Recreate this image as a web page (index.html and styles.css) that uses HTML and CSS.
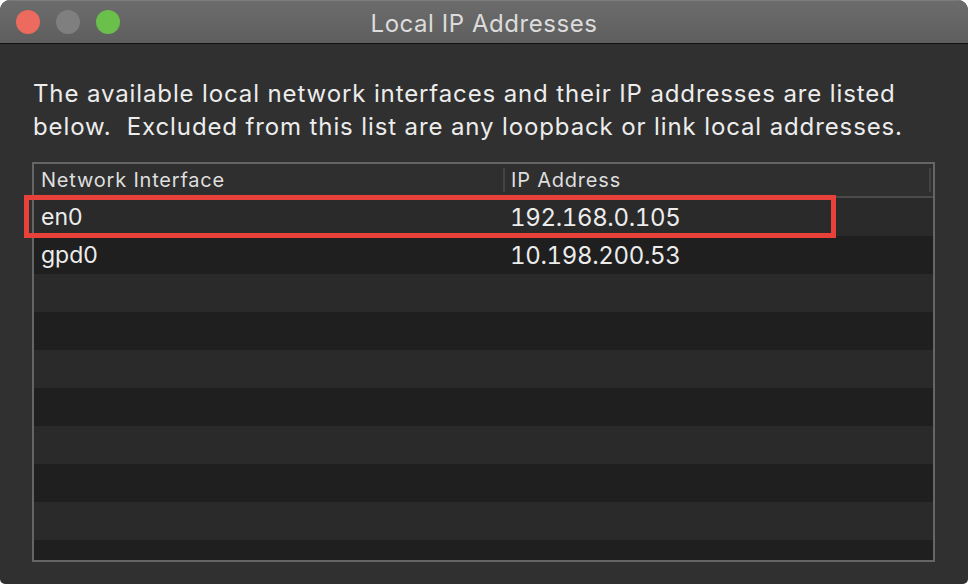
FILE: index.html
```html
<!DOCTYPE html>
<html lang="en">
  <head>
    <meta charset="UTF-8" />
    <meta name="viewport" content="width=device-width, initial-scale=1.0" />
    <title>Local IP Addresses</title>
    <link rel="stylesheet" href="styles.css">
  </head>
  <body>
    <div class="window">
      <!-- Title bar -->
      <div class="titlebar">
        <div class="lights">
          <span class="light close"></span>
          <span class="light minimize"></span>
          <span class="light zoom"></span>
        </div>
        <div class="title">Local IP Addresses</div>
      </div>

      <div class="content">
        <p class="intro">
          The available local network interfaces and their IP addresses are listed<br />
          below.&nbsp; Excluded from this list are any loopback or link local addresses.
        </p>

        <div class="table-wrap">
          <div class="table">
            <div class="row head">
              <div class="cell">Network Interface</div>
              <div class="cell sep">IP Address</div>
              <div class="cell end"></div>
            </div>
            <div class="rows">
              <div class="row">
                <div class="cell">en0</div>
                <div class="cell col2">192.168.0.105</div>
              </div>
              <div class="row">
                <div class="cell">gpd0</div>
                <div class="cell col2">10.198.200.53</div>
              </div>
              <div class="row"></div>
              <div class="row"></div>
              <div class="row"></div>
              <div class="row"></div>
              <div class="row"></div>
              <div class="row"></div>
              <div class="row"></div>
              <div class="row"></div>
            </div>
          </div>
          <!-- Highlight around the selected interface -->
          <div class="highlight"></div>
        </div>
      </div>
    </div>
  </body>
</html>
```

FILE: styles.css
```css
body {
  margin: 0;
  padding: 0;
  background-color: #ffffff;
  font-family: Inter, "Noto Sans", sans-serif;
  overflow: hidden;
}

.window {
  width: 968px;
  height: 584px;
  background-color: #303030;
  border-radius: 10px 10px 5px 5px;
  overflow: hidden;
  display: flex;
  flex-direction: column;
}

/* Title bar */
.titlebar {
  height: 44px;
  flex-shrink: 0;
  display: flex;
  align-items: center;
  position: relative;
  background: linear-gradient(#6c6c6c, #5e5e5e);
  border-top: 1px solid #7c7c7c;
  border-bottom: 1px solid #111111;
  box-sizing: border-box;
}

.lights {
  display: flex;
  gap: 16px;
  padding-left: 16px;
}

.light {
  width: 24px;
  height: 24px;
  border-radius: 50%;
}

.close {
  background-color: #ed6a5e;
}

.minimize {
  background-color: #7f7f7f;
}

.zoom {
  background-color: #6bbf4b;
}

.title {
  position: absolute;
  left: 0;
  right: 0;
  top: 8px;
  text-align: center;
  color: #dcdcdc;
  font-size: 24px;
  letter-spacing: 0.55px;
}

/* Content */
.content {
  padding: 33px 33px 0 32px;
}

.intro {
  margin: 0 0 19px 1px;
  color: #ececec;
  font-size: 24px;
  letter-spacing: 0.88px;
  line-height: 33px;
  white-space: nowrap;
}

.table-wrap {
  position: relative;
}

.table {
  width: 903px;
  height: 400px;
  box-sizing: border-box;
  border: 2px solid #656565;
  display: flex;
  flex-direction: column;
  overflow: hidden;
}

.row {
  display: grid;
  grid-template-columns: 469px 1fr;
  height: 38px;
  align-items: center;
  background-color: #2a2a2a;
  color: #ececec;
  font-size: 23px;
}

.rows .row:nth-child(even) {
  background-color: #1f1f1f;
}

.rows {
  flex: 1;
  overflow: hidden;
}

.cell {
  padding-left: 7px;
  white-space: nowrap;
}

.col2 {
  padding-left: 7px;
  font-size: 24px;
  font-feature-settings: "tnum";
  letter-spacing: -0.35px;
}

.row.head {
  grid-template-columns: 469px 1fr 4px;
  height: 34px;
  background-color: #2f2f2f;
  border-bottom: 2px solid #4a4a4a;
  box-sizing: border-box;
  font-size: 20px;
  letter-spacing: 0.8px;
  color: #dedede;
}

.head .sep {
  border-left: 2px solid #434343;
  padding-left: 6px;
  line-height: 24px;
}

.head .end {
  border-left: 2px solid #434343;
  height: 24px;
  padding: 0;
}

.highlight {
  position: absolute;
  left: -8px;
  top: 33px;
  width: 802px;
  height: 33px;
  border: 5px solid #e8413a;
}
```
